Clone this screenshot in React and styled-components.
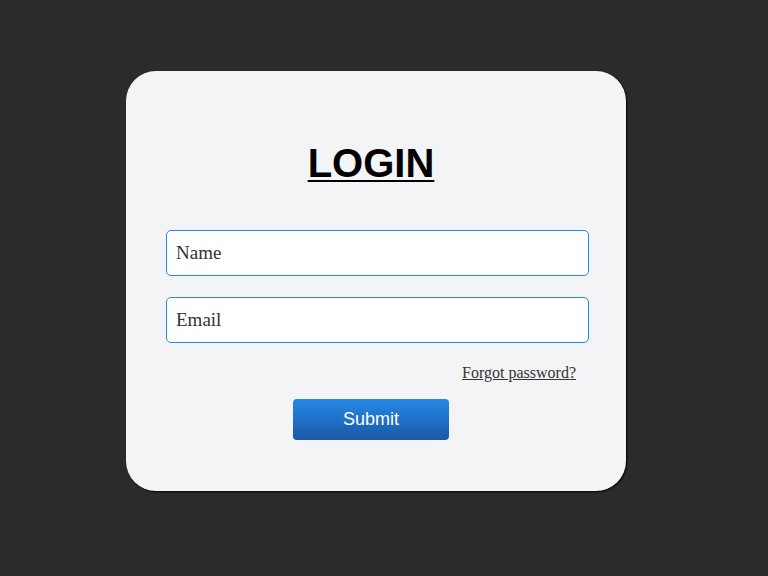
import React from 'react';
import styled, { createGlobalStyle } from 'styled-components';

const GlobalStyle = createGlobalStyle`
  html, body {
    margin: 0;
    padding: 0;
    background-color: #2b2b2b;
  }
`;

const Page = styled.main`
  width: 752px;
  min-height: 576px;
  padding-top: 71px;
  box-sizing: border-box;
`;

const Card = styled.form`
  width: 500px;
  height: 420px;
  margin: 0 auto;
  box-sizing: border-box;
  padding: 70px 37px 0 40px;
  background-color: #f3f4f6;
  border-radius: 30px;
  box-shadow: 1px 1px 2px rgba(0, 0, 0, 0.9);
  display: flex;
  flex-direction: column;
`;

const Title = styled.h1`
  margin: 0 0 45px;
  padding-right: 13px;
  text-align: center;
  font-family: 'Liberation Sans', Arial, sans-serif;
  font-size: 40px;
  font-weight: 700;
  line-height: 44px;
  color: #000;
  text-decoration: underline;
  text-decoration-thickness: 2px;
  text-underline-offset: 3px;
`;

const Input = styled.input`
  height: 46px;
  width: 100%;
  box-sizing: border-box;
  margin-bottom: ${(p) => p.$gap || 0}px;
  padding: 0 9px;
  border: 1px solid #2a87e6;
  border-radius: 5px;
  background: #fff;
  font-family: 'Liberation Serif', 'Times New Roman', serif;
  font-size: 19px;
  color: #333;
  outline: none;
  &::placeholder {
    color: #333;
    opacity: 1;
  }
`;

const LinkRow = styled.div`
  display: flex;
  justify-content: flex-end;
  padding-right: 13px;
  margin-top: 21px;
`;

const ForgotLink = styled.a`
  font-family: 'Liberation Serif', 'Times New Roman', serif;
  font-size: 16px;
  color: #333;
  text-decoration: underline;
  line-height: 18px;
`;

const Submit = styled.button`
  align-self: center;
  margin-top: 17px;
  margin-left: -13px;
  width: 156px;
  height: 41px;
  border: none;
  border-radius: 4px;
  background: linear-gradient(to bottom, #2589e6, #1a58a6);
  color: #fff;
  font-family: 'Liberation Sans', Arial, sans-serif;
  font-size: 18px;
  cursor: pointer;
`;

const App = () => (
  <>
    <GlobalStyle />
    <Page>
      <Card onSubmit={(e) => e.preventDefault()}>
        <Title>LOGIN</Title>
        <Input type="text" placeholder="Name" $gap={21} />
        <Input type="email" placeholder="Email" />
        <LinkRow>
          <ForgotLink href="#">Forgot password?</ForgotLink>
        </LinkRow>
        <Submit type="submit">Submit</Submit>
      </Card>
    </Page>
  </>
);

export default App;
